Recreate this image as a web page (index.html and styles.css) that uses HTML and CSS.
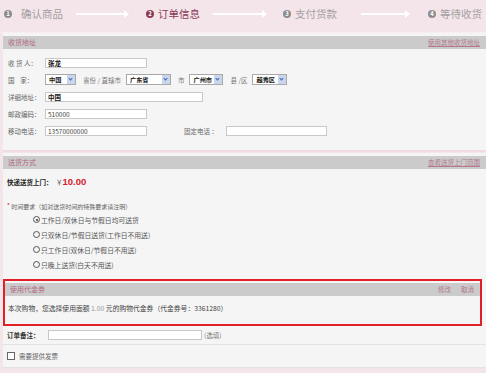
FILE: index.html
```html
<!DOCTYPE html>
<html lang="zh-CN">
<head>
    <meta charset="UTF-8">
    <title>订单信息</title>
    <link rel="stylesheet" href="styles.css">
</head>
<body>
    <div class="page">
        <div class="steps">
            <span class="num">1</span><span class="step-txt s1">确认商品</span>
            <span class="arrow a1"></span>
            <span class="num cur">2</span><span class="step-txt cur">订单信息</span>
            <span class="arrow a2"></span>
            <span class="num">3</span><span class="step-txt">支付货款</span>
            <span class="arrow a3"></span>
            <span class="num">4</span><span class="step-txt">等待收货</span>
        </div>

        <div class="box first">
            <div class="box-hd">
                <span>收货地址</span>
                <a class="hd-link">使用其他收货地址</a>
            </div>
            <div class="addr">
                <div class="row">
                    <span class="lbl">收 货 人：</span>
                    <span class="ipt w100 strong">张龙</span>
                </div>
                <div class="row">
                    <span class="lbl">国&nbsp;&nbsp;&nbsp;&nbsp;家：</span>
                    <span class="sel w30">中国<i class="drop"></i></span>
                    <span class="mid-lbl">省份 / 直辖市</span>
                    <span class="sel w44">广东省<i class="drop"></i></span>
                    <span class="mid-lbl">市</span>
                    <span class="sel w32">广州市<i class="drop"></i></span>
                    <span class="mid-lbl">县 /区</span>
                    <span class="sel w34">越秀区<i class="drop"></i></span>
                </div>
                <div class="row">
                    <span class="lbl">详细地址：</span>
                    <span class="ipt w156 strong">中国</span>
                </div>
                <div class="row">
                    <span class="lbl">邮政编码：</span>
                    <span class="ipt w100">510000</span>
                </div>
                <div class="row">
                    <span class="lbl">移动电话：</span>
                    <span class="ipt w100">13570000000</span>
                    <span class="tel-lbl">固定电话 ：</span>
                    <span class="ipt w99"></span>
                </div>
            </div>
        </div>

        <div class="box second">
            <div class="box-hd">
                <span>送货方式</span>
                <a class="hd-link">查看送货上门范围</a>
            </div>
            <div class="ship">
                <div class="fee"><b>快递送货上门：</b> <span class="yen">￥</span><span class="price">10.00</span></div>
                <div class="need"><sup>*</sup> 时间要求（如对送货时间的特殊要求请注明）</div>
                <ul class="radios">
                    <li><i class="radio on"></i>工作日/双休日与节假日均可送货</li>
                    <li><i class="radio"></i>只双休日/节假日送货(工作日不用送)</li>
                    <li><i class="radio"></i>只工作日(双休日/节假日不用送)</li>
                    <li><i class="radio"></i>只晚上送货(白天不用送)</li>
                </ul>
            </div>

            <div class="coupon">
                <div class="box-hd">
                    <span>使用代金券</span>
                    <span class="hd-links"><a class="hd-link">修改</a><a class="hd-link">取消</a></span>
                </div>
                <p class="coupon-txt">本次购物，您选择使用面额 <span class="gray">1.00</span> 元的购物代金券（代金券号：3361280）</p>
            </div>

            <div class="remark">
                <b>订单备注：</b>
                <span class="ipt w152"></span>
                <span class="opt">(选填)</span>
            </div>
            <div class="invoice">
                <i class="check"></i>需要提供发票
            </div>
        </div>
    </div>
</body>
</html>
```

FILE: styles.css
```css
body {
    margin: 0;
    background-color: #fff;
    font-family: "Liberation Sans", "Noto Sans CJK SC", sans-serif;
    font-size: 6.5px;
    color: #555;
}

.page {
    width: 486px;
    height: 373px;
    background-color: #f3e5ea;
    overflow: hidden;
}

/* step bar */
.steps {
    height: 27px;
    display: flex;
    align-items: center;
    padding-left: 4px;
    padding-bottom: 5px;
    border-bottom: 1px solid #f8eef1;
    font-family: "Noto Sans CJK SC", sans-serif;
}

.num {
    width: 8px;
    height: 8px;
    border-radius: 50%;
    background-color: #8d8d8d;
    color: #fff;
    font-size: 6px;
    font-weight: bold;
    line-height: 8px;
    text-align: center;
    flex: none;
}

.num.cur {
    background-color: #8c3b55;
}

.step-txt {
    font-size: 10.5px;
    color: #a5a0a2;
    margin-left: 4px;
    white-space: nowrap;
}

.step-txt.s1 {
    margin-left: 9px;
}

.step-txt.cur {
    color: #8c3b55;
}

.arrow {
    position: relative;
    height: 2px;
    background-color: #fff;
    flex: none;
}

.arrow::after {
    content: "";
    position: absolute;
    right: -1px;
    top: -3px;
    border-left: 5px solid #fff;
    border-top: 4px solid transparent;
    border-bottom: 4px solid transparent;
}

.a1 { width: 52px; margin: 0 18px 0 13px; }
.a2 { width: 53px; margin: 0 17px 0 13px; }
.a3 { width: 48px; margin: 0 19px 0 24px; }

/* boxes */
.box {
    margin-left: 3px;
    background-color: #f5f5f5;
    padding-top: 3px;
}

.first {
    padding-bottom: 11px;
    border-bottom: 2px solid #f1dbe1;
}

.second {
    margin-top: 1px;
    padding-top: 3px;
}

.box-hd {
    height: 13px;
    line-height: 13px;
    background-color: #cbcbcb;
    color: #b3687f;
    font-family: "Noto Sans CJK SC", sans-serif;
    font-size: 7px;
    padding: 0 6px 0 5px;
    display: flex;
    justify-content: space-between;
}

.hd-link {
    color: #b47a8e;
    text-decoration: underline;
    font-size: 6.5px;
}

.hd-links .hd-link {
    margin-left: 10px;
    text-decoration: none;
}

/* address form */
.addr {
    padding: 5px 0 0 5px;
}

.row {
    height: 17px;
    display: flex;
    align-items: center;
}

.lbl {
    width: 37px;
    font-family: "Noto Sans CJK SC", sans-serif;
    color: #666;
    white-space: pre;
}

.ipt {
    height: 8px;
    line-height: 8px;
    background-color: #fff;
    border: 1px solid #c8c8c8;
    padding-left: 2px;
    color: #444;
    font-family: "Noto Sans CJK SC", sans-serif;
}

.strong {
    color: #111;
    font-weight: bold;
}

.w100 { width: 98px; }
.w156 { width: 154px; }
.w99 { width: 97px; }
.w152 { width: 150px; }

.sel {
    position: relative;
    height: 9px;
    line-height: 9px;
    background-color: #fff;
    border: 1px solid #a9a9a9;
    padding-left: 3px;
    color: #111;
    font-weight: bold;
    font-size: 6.2px;
    font-family: "Noto Sans CJK SC", sans-serif;
}

.w30 { width: 26px; }
.w32 { width: 29px; }
.w44 { width: 40px; }
.w34 { width: 30px; }

.drop {
    position: absolute;
    right: 0;
    top: 0;
    width: 8px;
    height: 9px;
    background-color: #c9d6ee;
}

.drop::after {
    content: "";
    position: absolute;
    left: 2px;
    top: 2px;
    width: 2px;
    height: 2px;
    border-right: 1px solid #3960a8;
    border-bottom: 1px solid #3960a8;
    transform: rotate(45deg);
}

.mid-lbl {
    margin: 0 5px 0 7px;
    color: #777;
    font-family: "Noto Sans CJK SC", sans-serif;
}

.tel-lbl {
    margin: 0 8px 0 37px;
    color: #666;
    font-family: "Noto Sans CJK SC", sans-serif;
}

/* shipping */
.ship {
    padding: 6px 0 0 4px;
    font-family: "Noto Sans CJK SC", sans-serif;
}

.fee {
    height: 13px;
    line-height: 13px;
    color: #333;
}

.fee b {
    color: #222;
}

.yen {
    color: #555;
    margin-left: 2px;
}

.price {
    color: #d5202c;
    font-weight: bold;
    font-size: 9.5px;
    font-family: "Liberation Sans", sans-serif;
}

.need {
    margin-top: 12px;
    height: 12px;
    line-height: 12px;
    color: #666;
    font-size: 6px;
}

.need sup {
    color: #d5202c;
    font-size: 6px;
    vertical-align: 1px;
}

.radios {
    list-style: none;
    margin: 0;
    padding: 0 0 0 26px;
}

.radios li {
    height: 15px;
    display: flex;
    align-items: center;
    color: #555;
    font-size: 6.8px;
}

.radio {
    width: 5px;
    height: 5px;
    border: 1px solid #555;
    border-radius: 50%;
    margin-right: 1px;
    position: relative;
}

.radio.on::after {
    content: "";
    position: absolute;
    left: 1.5px;
    top: 1.5px;
    width: 2px;
    height: 2px;
    border-radius: 50%;
    background-color: #333;
}

/* coupon */
.coupon {
    margin: 7px 4px 0 0;
    border: 2px solid #e01f26;
    padding-top: 2px;
    box-sizing: border-box;
    height: 47px;
}

.coupon-txt {
    margin: 0;
    padding: 0 0 0 3px;
    line-height: 25px;
    font-family: "Noto Sans CJK SC", sans-serif;
    color: #444;
    font-size: 6.8px;
}

.gray {
    color: #999;
}

.remark {
    height: 18px;
    display: flex;
    align-items: center;
    padding-left: 4px;
    border-bottom: 1px solid #e2e2e2;
    font-family: "Noto Sans CJK SC", sans-serif;
    color: #333;
}

.remark b {
    width: 41px;
}

.opt {
    margin-left: 2px;
    color: #777;
}

.invoice {
    height: 22px;
    display: flex;
    align-items: center;
    padding-left: 4px;
    border-bottom: 1px solid #e2e2e2;
    font-family: "Noto Sans CJK SC", sans-serif;
    color: #666;
}

.check {
    width: 6px;
    height: 6px;
    border: 1px solid #666;
    background-color: #fff;
    margin-right: 4px;
}
```
